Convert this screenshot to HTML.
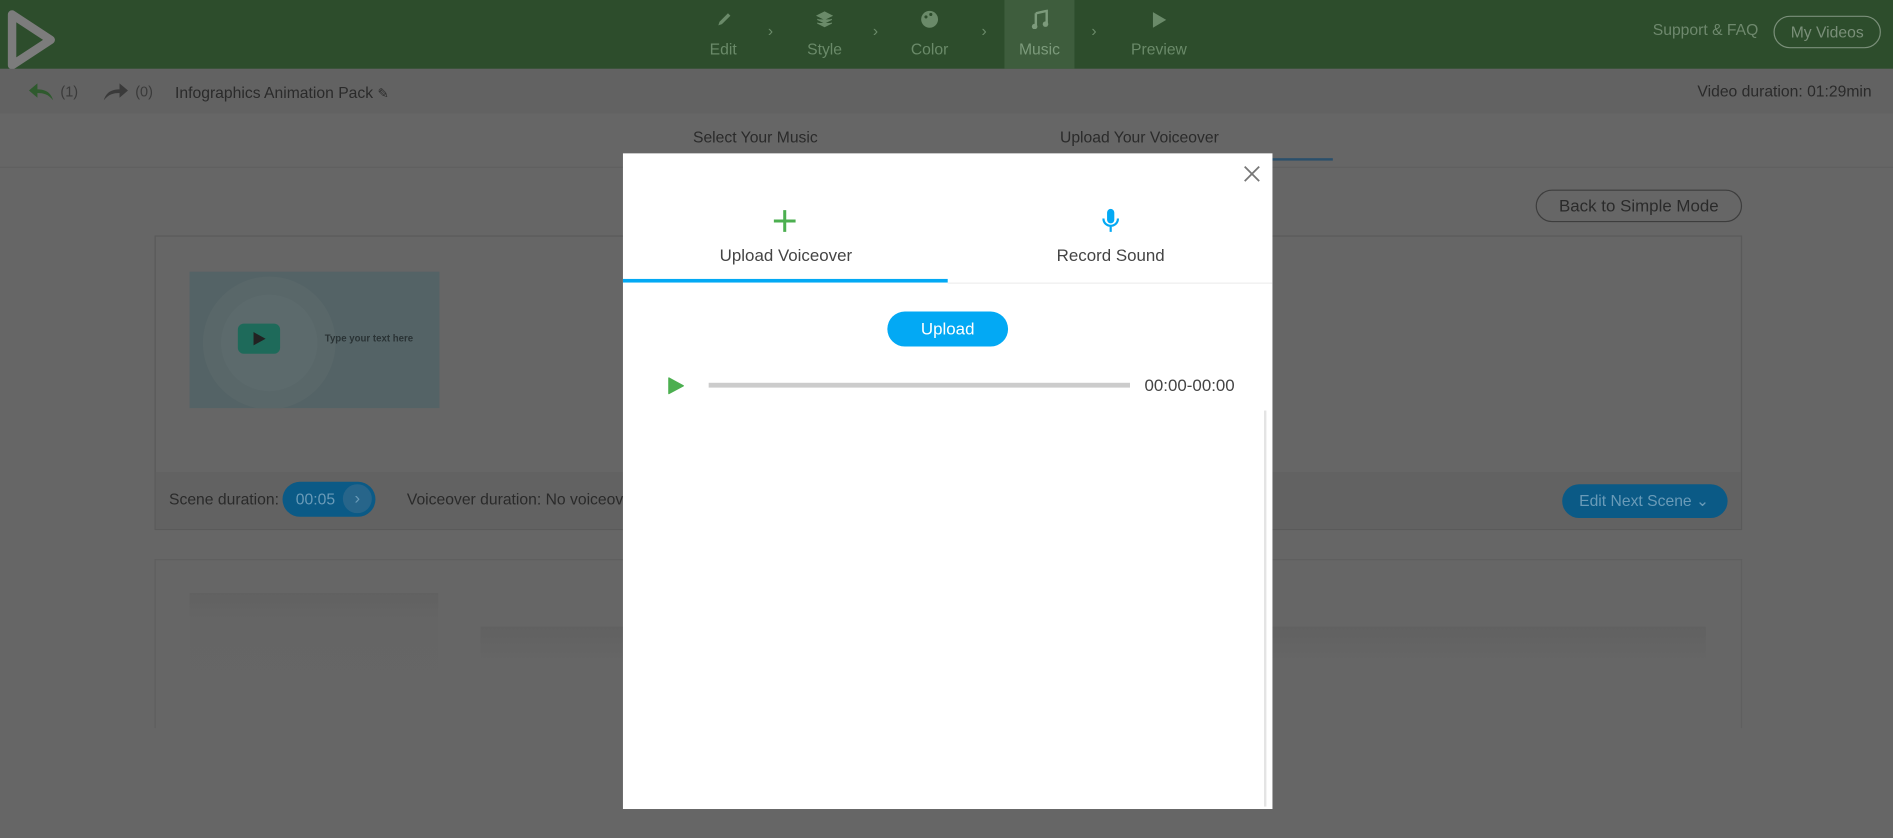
<!DOCTYPE html>
<html><head><meta charset="utf-8"><style>
*{box-sizing:border-box;margin:0;padding:0}
html,body{width:1893px;height:838px;overflow:hidden;background:#666}
#w{position:absolute;left:0;top:0;width:1568px;height:694px;transform:scale(1.20727,1.20749);transform-origin:0 0;font-family:"Liberation Sans",sans-serif;background:#666;color:#333}
.a{position:absolute}
.hdr{left:0;top:0;width:1568px;height:57px;background:#2d4d2c}
.nav{top:0;height:57px;text-align:center;color:#6a8a69;font-size:13px}
.nav span{position:absolute;left:0;right:0;top:33px}
.chev{color:#6a8a69;font-size:13px;top:18px}
.tb{left:0;top:57px;width:1568px;height:37px;background:#626262}
.mod{left:516px;top:127px;width:538px;height:543px;background:#fff}
</style></head><body><div id="w">
<div class="a hdr"></div>
<svg class="a" style="left:6px;top:8px" width="40" height="50" viewBox="0 0 40 50"><path d="M4 4 L36 25 L4 46 Z" fill="none" stroke="#7c7c7c" stroke-width="7" stroke-linejoin="round"/></svg>
<div class="a" style="left:832px;top:0;width:58px;height:57px;background:#3e5d3d"></div>
<div class="a nav" style="left:578px;width:42px"><svg class="a" style="left:15px;top:9px" width="14" height="14"><path d="M2 12 L3 9 L10 2 L12 4 L5 11 Z" fill="#6a8a69"/></svg><span>Edit</span></div>
<div class="a chev" style="left:636px">›</div>
<div class="a nav" style="left:660px;width:46px"><svg class="a" style="left:16px;top:9px" width="14" height="14"><path d="M7 1 L13 4 L7 7 L1 4Z M1 7 L7 10 L13 7 M1 10 L7 13 L13 10" fill="#6a8a69" stroke="#6a8a69"/></svg><span>Style</span></div>
<div class="a chev" style="left:723px">›</div>
<div class="a nav" style="left:748px;width:44px"><svg class="a" style="left:14px;top:8px" width="16" height="16"><circle cx="8" cy="8" r="7" fill="#6a8a69"/><circle cx="5" cy="6" r="1.3" fill="#2d4d2c"/><circle cx="9" cy="4" r="1.3" fill="#2d4d2c"/></svg><span>Color</span></div>
<div class="a chev" style="left:813px">›</div>
<div class="a nav" style="left:832px;width:58px;color:#7c9a7b"><svg class="a" style="left:21px;top:8px" width="16" height="16"><path d="M5 3 L14 1 L14 12 M5 3 L5 14" stroke="#7c9a7b" stroke-width="2" fill="none"/><circle cx="4" cy="14" r="2.3" fill="#7c9a7b"/><circle cx="13" cy="12" r="2.3" fill="#7c9a7b"/></svg><span>Music</span></div>
<div class="a chev" style="left:904px">›</div>
<div class="a nav" style="left:932px;width:56px"><svg class="a" style="left:21px;top:9px" width="14" height="15"><path d="M2 1 L13 7.5 L2 14Z" fill="#6a8a69"/></svg><span>Preview</span></div>
<div class="a" style="left:1369px;top:17px;font-size:13px;color:#6e886d">Support &amp; FAQ</div>
<div class="a" style="left:1469px;top:13px;width:89px;height:27px;border:1px solid #7a8f79;border-radius:14px;color:#7a8f79;font-size:13px;text-align:center;line-height:25px">My Videos</div>
<div class="a tb"></div>
<svg class="a" style="left:22px;top:66px" width="24" height="18"><path d="M22 17 C20 10 15 8 9 8 L9 3 L2 9 L9 15 L9 11 C14 11 18 12 22 17Z" fill="#2f5a2e"/></svg>
<div class="a" style="left:50px;top:69px;font-size:12px;color:#3a3a3a">(1)</div>
<svg class="a" style="left:84px;top:66px" width="24" height="18"><path d="M2 17 C4 10 9 8 15 8 L15 3 L22 9 L15 15 L15 11 C10 11 6 12 2 17Z" fill="#3a3a3a"/></svg>
<div class="a" style="left:112px;top:69px;font-size:12px;color:#3a3a3a">(0)</div>
<div class="a" style="left:145px;top:69px;font-size:13px;color:#2a2a2a">Infographics Animation Pack <span style="font-size:11px">✎</span></div>
<div class="a" style="left:1406px;top:68px;font-size:13px;color:#2a2a2a">Video duration: 01:29min</div>
<div class="a" style="left:574px;top:106px;font-size:13px;color:#2a2a2a">Select Your Music</div>
<div class="a" style="left:878px;top:106px;font-size:13px;color:#2a2a2a">Upload Your Voiceover</div>
<div class="a" style="left:1054px;top:131px;width:50px;height:2px;background:#2a4f6b"></div>
<div class="a" style="left:0;top:138px;width:1568px;height:1px;background:#5f5f5f"></div>
<div class="a" style="left:1272px;top:157px;width:171px;height:27px;border:1px solid #3d3d3d;border-radius:14px;font-size:14px;color:#2a2a2a;text-align:center;line-height:25px">Back to Simple Mode</div>
<div class="a" style="left:128px;top:195px;width:1315px;height:244px;border:1px solid #5a5a5a"></div>
<div class="a" style="left:129px;top:391px;width:1313px;height:47px;background:#626262"></div>
<div class="a" style="left:157px;top:225px;width:207px;height:113px;background:#546366;overflow:hidden"><div class="a" style="left:11px;top:4px;width:110px;height:110px;border-radius:50%;background:#596769"></div><div class="a" style="left:26px;top:19px;width:80px;height:80px;border-radius:50%;background:#5c6a6c"></div></div>
<div class="a" style="left:197px;top:268px;width:35px;height:25px;border-radius:5px;background:#1e6a5a"></div>
<svg class="a" style="left:209px;top:274px" width="12" height="13"><path d="M1 1 L11 6.5 L1 12Z" fill="#222"/></svg>
<div class="a" style="left:269px;top:276px;font-size:8px;font-weight:bold;color:#2a3335">Type your text here</div>
<div class="a" style="left:140px;top:406px;font-size:13px;color:#2a2a2a">Scene duration:</div>
<div class="a" style="left:234px;top:399px;width:77px;height:29px;border-radius:15px;background:#0b5a86"></div>
<div class="a" style="left:245px;top:406px;font-size:13px;color:#6a9bb8">00:05</div>
<div class="a" style="left:284px;top:401px;width:24px;height:24px;border-radius:50%;background:#27658a;color:#6a9bb8;text-align:center;line-height:23px;font-size:14px">›</div>
<div class="a" style="left:337px;top:406px;font-size:13px;color:#2a2a2a">Voiceover duration: No voiceover</div>
<div class="a" style="left:1294px;top:401px;width:137px;height:28px;border-radius:14px;background:#0b5a86;color:#6a9bb8;font-size:13px;line-height:28px;padding-left:14px">Edit Next Scene ⌄</div>
<div class="a" style="left:128px;top:463px;width:1315px;height:140px;border:1px solid #5f5f5f;border-bottom:none"></div>
<div class="a" style="left:157px;top:491px;width:206px;height:110px;background:linear-gradient(#616161,#656565 20%,#666)"></div>
<div class="a" style="left:398px;top:519px;width:1015px;height:30px;background:linear-gradient(#616161,#666)"></div>
<div class="a mod">
<svg class="a" style="left:514px;top:10px" width="14" height="14"><path d="M1 1 L13 13 M13 1 L1 13" stroke="#777" stroke-width="1.5"/></svg>
<svg class="a" style="left:124px;top:46px" width="20" height="20"><path d="M10 1 V19 M1 10 H19" stroke="#4caf50" stroke-width="2.5"/></svg>
<div class="a" style="left:0;width:270px;top:76px;text-align:center;font-size:14px;color:#444">Upload Voiceover</div>
<svg class="a" style="left:396px;top:45px" width="16" height="22"><rect x="5" y="1" width="6" height="12" rx="3" fill="#03a9f4"/><path d="M2 9 C2 17 14 17 14 9 M8 15 V20" stroke="#03a9f4" stroke-width="1.8" fill="none"/></svg>
<div class="a" style="left:270px;width:268px;top:76px;text-align:center;font-size:14px;color:#444">Record Sound</div>
<div class="a" style="left:0;top:104px;width:269px;height:3px;background:#03a9f4"></div>
<div class="a" style="left:269px;top:107px;width:269px;height:1px;background:#eee"></div>
<div class="a" style="left:219px;top:131px;width:100px;height:29px;border-radius:15px;background:#03a9f4;color:#fff;font-size:14px;text-align:center;line-height:29px">Upload</div>
<svg class="a" style="left:37px;top:185px" width="14" height="15"><path d="M1 1 L13 7.5 L1 14Z" fill="#4caf50" stroke="#4caf50" stroke-linejoin="round"/></svg>
<div class="a" style="left:71px;top:190px;width:349px;height:4px;background:#ccc"></div>
<div class="a" style="left:432px;top:184px;font-size:14px;color:#444">00:00-00:00</div>
<div class="a" style="left:531px;top:213px;width:2px;height:328px;background:#e4e4e4"></div>
</div>
</div></body></html>
